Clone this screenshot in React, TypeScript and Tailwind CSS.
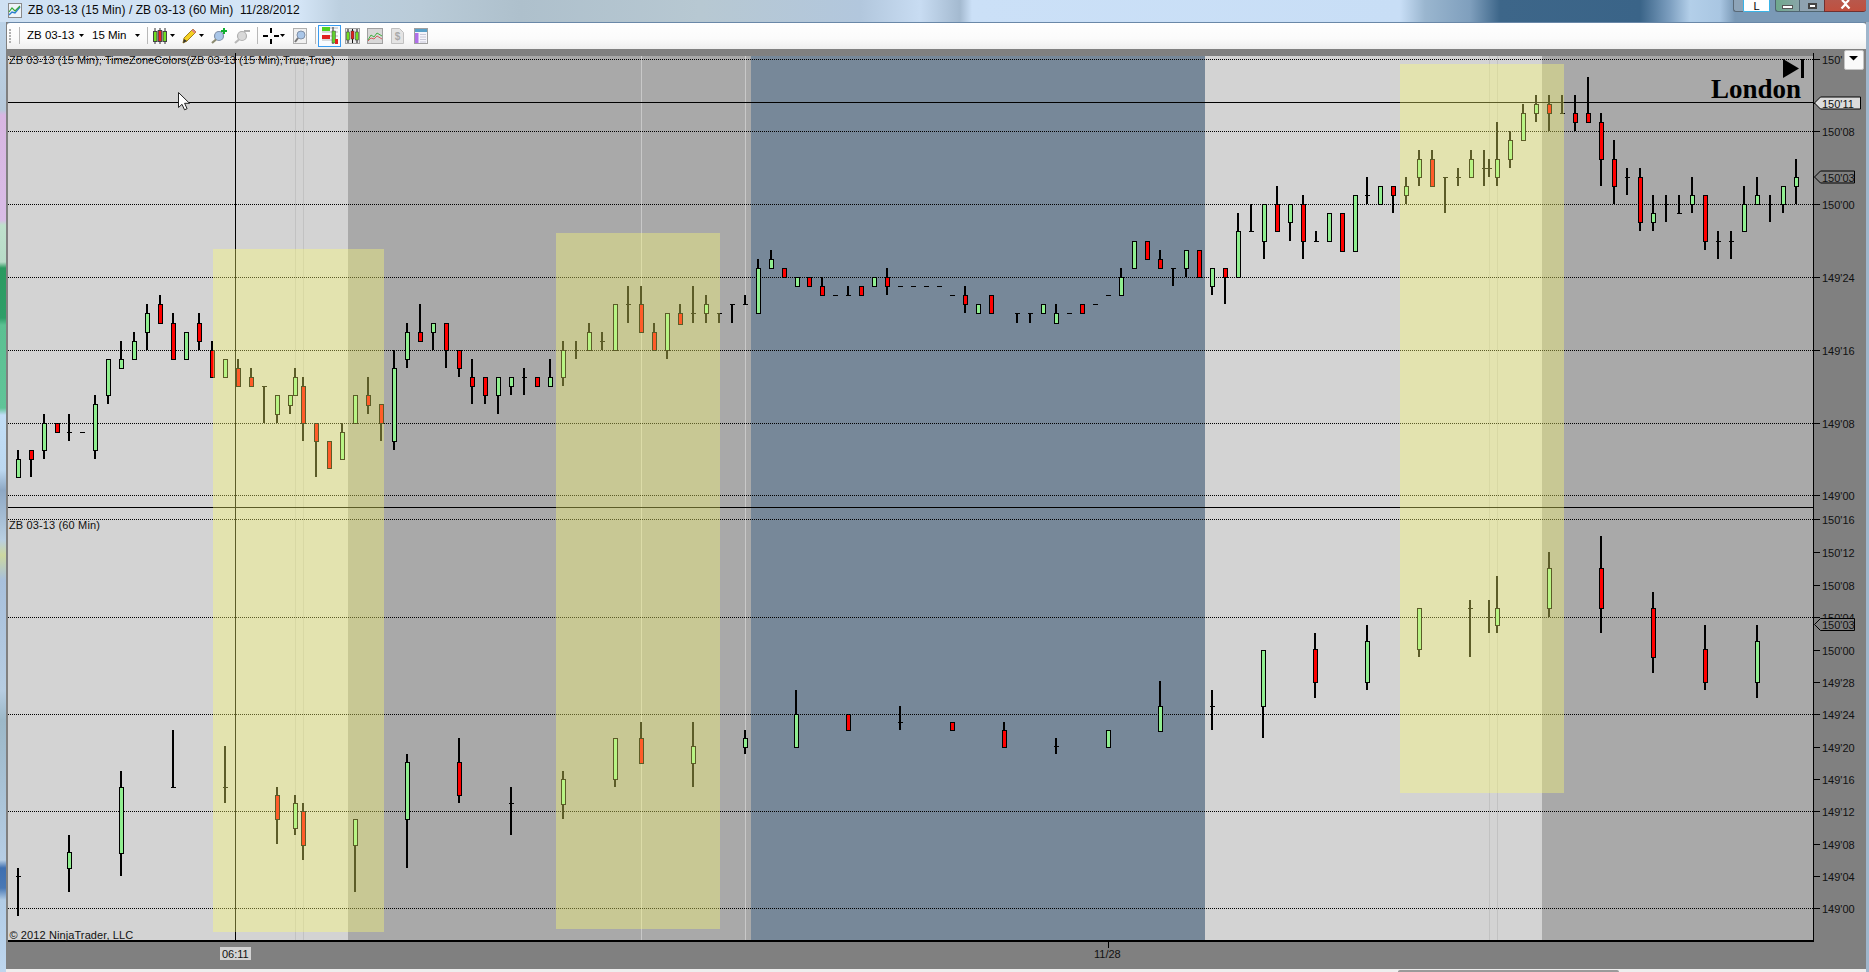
import React from "react";

type Bar = [number, number, number, number, number, "g" | "r" | "d"];
// x, high, low, bodyTop, bodyBottom, kind (d = doji dash at bodyTop)
const upper: Bar[] = [
  [18,450,477,459,477,"g"],[31,450,477,450,459,"r"],[44,414,459,423,450,"g"],[57,423,432,423,432,"r"],[69,414,441,432,432,"d"],[82,432,432,432,432,"d"],
  [95,395,459,404,450,"g"],[108,359,404,359,395,"g"],[121,341,368,359,368,"g"],[134,332,359,341,359,"g"],[147,304,350,313,332,"g"],[160,295,323,304,323,"r"],
  [173,313,359,323,359,"r"],[186,332,359,332,359,"g"],[199,313,350,323,341,"r"],[212,341,377,350,377,"r"],[225,359,377,359,377,"g"],[238,359,386,368,386,"r"],
  [251,368,386,377,386,"r"],[264,386,423,386,386,"d"],[277,395,423,395,414,"g"],[290,395,414,395,405,"g"],[295,368,395,377,395,"g"],[303,377,441,386,423,"r"],
  [316,423,477,423,441,"r"],[329,441,468,441,468,"r"],[342,423,459,432,459,"g"],[355,395,423,395,423,"g"],[368,377,414,395,405,"r"],[381,404,441,404,423,"r"],
  [394,350,450,368,441,"g"],[407,323,368,332,359,"g"],[420,304,341,332,341,"r"],[433,323,350,323,332,"g"],[446,323,368,323,350,"r"],[459,350,377,350,368,"r"],
  [472,359,404,377,386,"r"],[485,377,404,377,395,"r"],[498,377,414,377,395,"g"],[511,377,395,377,386,"g"],[524,368,395,377,377,"d"],[537,377,386,377,386,"r"],
  [550,359,386,377,386,"g"],[563,341,386,350,377,"g"],[576,341,359,350,350,"d"],[589,323,350,332,350,"g"],[602,332,350,341,341,"d"],[615,304,350,304,350,"g"],
  [628,286,323,304,304,"d"],[641,286,332,304,332,"r"],[654,323,350,332,350,"r"],[667,313,359,313,350,"g"],[680,304,324,313,324,"r"],[693,286,323,313,313,"d"],
  [706,295,323,304,313,"g"],[719,313,323,313,313,"d"],[732,304,323,304,304,"d"],[745,295,304,304,304,"d"],[758,259,313,268,313,"g"],[771,250,268,259,268,"g"],
  [784,268,277,268,277,"r"],[797,277,286,277,286,"g"],[809,277,286,277,286,"r"],[822,277,295,286,295,"r"],[835,295,295,295,295,"d"],[848,286,295,295,295,"d"],
  [861,286,295,286,295,"r"],[874,277,286,277,286,"g"],[887,268,295,277,286,"r"],[900,286,286,286,286,"d"],[913,286,286,286,286,"d"],[926,286,286,286,286,"d"],
  [939,286,286,286,286,"d"],[952,295,295,295,295,"d"],[965,286,313,295,304,"r"],[978,304,313,304,313,"g"],[991,295,313,295,313,"r"],[1017,313,323,313,313,"d"],
  [1030,313,323,313,313,"d"],[1043,304,313,304,313,"g"],[1056,304,323,313,323,"g"],[1069,313,313,313,313,"d"],[1082,304,313,304,313,"r"],[1095,304,304,304,304,"d"],
  [1108,295,295,295,295,"d"],[1121,268,295,277,295,"g"],[1134,241,268,241,268,"g"],[1147,241,259,241,259,"r"],[1160,250,268,259,268,"r"],[1173,268,286,268,268,"d"],
  [1186,250,277,250,268,"g"],[1199,250,277,250,277,"r"],[1212,268,295,268,286,"g"],[1225,268,304,268,277,"r"],[1238,213,277,231,277,"g"],[1251,204,231,231,231,"d"],
  [1264,204,259,204,241,"g"],[1277,186,231,204,231,"r"],[1290,204,241,204,222,"g"],[1303,195,259,204,241,"r"],[1316,231,241,241,241,"d"],[1329,213,241,213,241,"g"],
  [1342,213,251,213,251,"r"],[1355,195,251,195,251,"g"],[1367,177,204,195,195,"d"],[1380,186,204,186,204,"g"],[1393,186,213,186,195,"r"],[1406,177,204,186,195,"g"],
  [1419,150,186,159,177,"g"],[1432,150,186,159,186,"r"],[1445,177,213,177,177,"d"],[1458,168,186,177,177,"d"],[1471,150,177,159,177,"g"],[1484,150,186,168,168,"d"],
  [1489,159,177,168,168,"d"],[1497,122,186,159,177,"g"],[1510,131,168,140,159,"g"],[1523,104,140,113,140,"g"],[1536,95,122,104,113,"g"],[1549,95,131,104,113,"r"],
  [1562,95,113,113,113,"d"],[1575,95,131,113,122,"r"],[1588,77,122,113,122,"r"],[1601,113,186,122,159,"r"],[1614,140,204,159,186,"r"],[1627,168,195,177,177,"d"],
  [1640,168,231,177,222,"r"],[1653,195,231,213,222,"g"],[1666,195,222,204,204,"d"],[1679,195,213,213,213,"d"],[1692,177,213,195,204,"g"],[1705,195,250,195,241,"r"],
  [1718,231,259,241,241,"d"],[1731,231,259,241,241,"d"],[1744,186,231,204,231,"g"],[1757,177,204,195,204,"g"],[1770,195,222,204,204,"d"],[1783,186,213,186,204,"g"],
  [1796,159,204,177,186,"g"],
];

const lower: Bar[] = [
  [18,868,916,876,876,"d"],[69,835,892,852,868,"g"],[121,771,876,787,853,"g"],[173,730,787,787,787,"d"],[225,746,803,787,787,"d"],[277,787,844,795,819,"r"],
  [295,795,835,803,828,"g"],[303,803,860,811,845,"r"],[355,819,892,819,845,"g"],[407,754,868,762,819,"g"],[459,738,803,762,795,"r"],[511,787,835,803,803,"d"],
  [563,771,819,779,804,"g"],[615,738,787,738,779,"g"],[641,722,763,738,763,"r"],[693,722,787,746,763,"g"],[745,730,754,738,747,"g"],[796,690,747,714,747,"g"],
  [848,714,730,714,730,"r"],[900,706,730,722,722,"d"],[952,722,730,722,730,"r"],[1004,722,747,730,747,"r"],[1056,738,754,746,746,"d"],[1108,730,747,730,747,"g"],
  [1160,681,731,706,731,"g"],[1212,690,730,706,706,"d"],[1263,650,738,650,706,"g"],[1315,633,698,649,682,"r"],[1367,625,690,641,682,"g"],[1419,608,657,608,649,"g"],
  [1470,600,657,608,608,"d"],[1489,600,633,617,617,"d"],[1497,576,633,608,625,"g"],[1549,552,617,568,608,"g"],[1601,536,633,568,608,"r"],[1653,592,673,608,657,"r"],
  [1705,625,690,649,682,"r"],[1757,625,698,641,682,"g"],
];

const gridUpper = [59, 131, 204, 277, 350, 423, 495];
const gridLower = [519, 617, 714, 811, 908];
const labelsUpper: [string, number][] = [["150'", 59], ["150'08", 131], ["150'00", 204], ["149'24", 277], ["149'16", 350], ["149'08", 423], ["149'00", 495]];
const labelsLower: [string, number][] = [["150'16", 519], ["150'12", 552], ["150'08", 585], ["150'04", 617], ["150'00", 650], ["149'28", 682], ["149'24", 714], ["149'20", 747], ["149'16", 779], ["149'12", 811], ["149'08", 844], ["149'04", 876], ["149'00", 908]];
const paleLight = [295, 303, 1489, 1497];
const paleDark = [641, 745];

function Candle({ b }: { b: Bar }) {
  const [x, hi, lo, top, bot, kind] = b;
  return (
    <g>
      {lo > hi && <rect x={x - 1} y={hi} width={2} height={lo - hi} fill="#000" />}
      {kind === "d" ? (
        <rect x={x - 2} y={top} width={5} height={1} fill="#000" />
      ) : (
        <rect x={x - 1.5} y={top + 0.5} width={4} height={bot - top} fill={kind === "g" ? "#90ee90" : "#ff0000"} stroke="#000" strokeWidth={1} />
      )}
    </g>
  );
}

function Caret({ className = "ml-[7px]" }: { className?: string }) {
  return (
    <svg width="5" height="3" viewBox="0 0 5 3" className={`shrink-0 ${className}`}>
      <path d="M0 0h5L2.5 3z" fill="#000" />
    </svg>
  );
}

function Sep({ className }: { className: string }) {
  return <div className={`h-[17px] w-[1px] shrink-0 bg-[#b8b8b8] ${className}`} />;
}

function Magnifier({ plus, minus, gray }: { plus?: boolean; minus?: boolean; gray?: boolean }) {
  return (
    <svg width="16" height="16" viewBox="0 0 16 16">
      <circle cx="8" cy="8" r="4.5" fill={gray ? "#d8d8d8" : "#a9c6e8"} stroke={gray ? "#b0b0b0" : "#8090a8"} strokeWidth="1.2" />
      <path d="M5 11.5L1 15" stroke={gray ? "#b8b8b8" : "#8a8a70"} strokeWidth="2.2" />
      {plus && <path d="M13 0v6M10 3h6" stroke="#10b030" strokeWidth="2" />}
      {minus && <path d="M10 3h6" stroke="#b0b0b0" strokeWidth="2" />}
    </svg>
  );
}

export default function App() {
  return (
    <div className="flex h-[972px] w-[1869px] flex-col overflow-hidden bg-[#808080] [font-family:'Liberation_Sans',Arial,sans-serif]">
      {/* Title bar */}
      <header className="flex h-[22px] shrink-0 items-start bg-[linear-gradient(90deg,#cfe1f3_0,#d4e5f6_300px,#bccfdf_340px,#b9cbd8_420px,#aec0cc_520px,#b7c8d2_700px,#b2c7dd_860px,#c8dcf2_920px,#a4bad0_960px,#cbe0f7_972px,#c8def6_1400px,#9ab6cf_1425px,#7f9fbd_1470px,#3d6689_1500px,#3a6488_1640px,#7d9fc0_1670px,#b3cfe9_1690px,#a9c6e2_1720px,#7a99b6_1735px,#7a99b6_1869px)]">
        <svg width="14" height="15" viewBox="0 0 14 15" className="ml-[8px] mt-[3px] shrink-0">
          <rect x="0.5" y="0.5" width="13" height="14" fill="#eef3f8" stroke="#8a8a8a" />
          <path d="M1 12L4 9l3 1 5-6" stroke="#2d7fd0" strokeWidth="1.4" fill="none" />
          <path d="M1 9l3-4 3 3 5-5" stroke="#38a838" strokeWidth="1.2" fill="none" />
        </svg>
        <span className="ml-[6px] mt-[2px] whitespace-pre text-[12px] leading-[16px] tracking-[0.05px] text-[#0a0a0a]">ZB 03-13 (15 Min) / ZB 03-13 (60 Min)  11/28/2012</span>
        <div className="ml-auto mr-[3px] flex h-[12px] shrink-0 items-stretch overflow-hidden">
          <div className="w-[10px] rounded-bl-[3px] border-b border-l border-[#5a6a78] bg-[#8ea4b8]" />
          <div className="flex w-[27px] items-center justify-center rounded-b-[2px] border-b border-x border-[#39b4e8] bg-white text-[11px] leading-[10px] text-black">L</div>
          <div className="ml-[5px] flex w-[24px] items-end justify-center rounded-bl-[3px] border-b border-l border-[#4f6570] bg-[linear-gradient(90deg,#6fa88c,#8aa5a8)] pb-[2px]">
            <div className="h-[4px] w-[11px] border border-[#555] bg-white" />
          </div>
          <div className="flex w-[25px] items-center justify-center border-b border-l border-[#4f6570] bg-[#8fa2b0]">
            <div className="h-[6px] w-[9px] border-2 border-[#444] bg-white" />
          </div>
          <div className="flex w-[42px] items-start justify-center rounded-br-[3px] border-b border-l border-[#703030] bg-[linear-gradient(180deg,#b8584c,#c0503f)]">
            <svg width="11" height="9" viewBox="0 0 11 9">
              <path d="M2 0l3.5 3.4L9 0M1.5 8.5L5.5 4.2l4 4.3" stroke="#fff" strokeWidth="2.2" fill="none" />
            </svg>
          </div>
        </div>
      </header>

      <div className="flex min-h-0 flex-1">
        {/* Left window sliver */}
        <div className="w-[6px] shrink-0 bg-[linear-gradient(180deg,#bcd3e8_0,#b7c9da_88px,#d8b6e2_93px,#d9bce6_198px,#bfe0cc_203px,#b8dcc8_240px,#2b9a60_246px,#2e9e68_296px,#5cc092_303px,#60c498_386px,#c2def6_393px,#bcd8f0_448px,#8ea8c4_468px,#b9cfe2_518px,#cdd8a0_533px,#a8c0dc_558px,#b7cde2_668px,#9cb8c8_698px,#b6cde4_838px,#3f6fb0_846px,#4a78b4_866px,#b2cce6_878px,#bed6ee_950px)]" />
        <div className="flex min-w-0 flex-1 flex-col">
          {/* Toolbar */}
          <div className="ml-[1px] flex h-[27px] shrink-0 items-center rounded-t-[3px] border-t border-[#6a88a8] bg-[linear-gradient(180deg,#ffffff,#fbfbfb_60%,#eeeeee)] pb-[1px] text-[11.5px] text-black">
            <div className="ml-[2px] flex h-[14px] w-[3px] shrink-0 flex-col justify-between">
              {[0, 1, 2, 3, 4].map((i) => (
                <div key={i} className="h-[2px] w-[2px] bg-[#b0b0b0]" />
              ))}
            </div>
            <Sep className="ml-[7px]" />
            <span className="ml-[7px] w-[45px] shrink-0 whitespace-nowrap">ZB 03-13</span>
            <Caret />
            <span className="ml-[8px] w-[36px] shrink-0 whitespace-nowrap">15 Min</span>
            <Caret />
            <Sep className="ml-[7px]" />
            <svg width="14" height="16" viewBox="0 0 14 16" className="ml-[5px] shrink-0">
              <path d="M2 0v16M7 0v16M12 0v16" stroke="#333" />
              <rect x="0.5" y="3.5" width="3.5" height="10" fill="#70e020" stroke="#444" />
              <rect x="5.2" y="2.5" width="3.5" height="11" fill="#f02020" stroke="#444" />
              <rect x="10" y="3.5" width="3.5" height="10" fill="#70e020" stroke="#444" />
            </svg>
            <Caret className="ml-[3px]" />
            <svg width="15" height="16" viewBox="0 0 15 16" className="ml-[7px] shrink-0">
              <path d="M1 15l1-5L11 1l3 3-9 9z" fill="#f5d020" stroke="#a08020" />
              <path d="M1 15l1-4 3 2z" fill="#333" />
              <path d="M11 1l3 3-1.5 1.5-3-3z" fill="#e08080" />
            </svg>
            <Caret className="ml-[2px]" />
            <div className="ml-[7px] shrink-0"><Magnifier plus /></div>
            <div className="ml-[7px] shrink-0"><Magnifier minus gray /></div>
            <Sep className="ml-[7px]" />
            <svg width="16" height="16" viewBox="0 0 16 16" className="ml-[5px] shrink-0">
              <path d="M0 8h5M11 8h5M8 0v5M8 11v5" stroke="#000" strokeWidth="2" />
            </svg>
            <Caret className="ml-[1px]" />
            <svg width="14" height="16" viewBox="0 0 14 16" className="ml-[8px] shrink-0">
              <rect x="0.5" y="0.5" width="13" height="15" fill="#f0f0f0" stroke="#b0b0b0" />
              <circle cx="8" cy="7" r="4" fill="#a9c6e8" stroke="#8090a8" />
              <path d="M5 10l-3 4" stroke="#777" strokeWidth="2" />
            </svg>
            <Sep className="ml-[8px]" />
            <div className="ml-[2px] flex h-[22px] w-[23px] shrink-0 items-center justify-center border border-[#3a9cf0] bg-[#f8fbff]">
              <svg width="16" height="17" viewBox="0 0 16 17">
                <path d="M0 1h16M0 5h16M0 9h16M0 13h16" stroke="#b8b8b8" />
                <rect x="0" y="0" width="8" height="4" fill="#50d020" />
                <rect x="0" y="8" width="8" height="4" fill="#e02020" />
                <path d="M11 0v17" stroke="#333" />
                <rect x="10" y="4" width="3.5" height="12" fill="#60d030" stroke="#444" strokeWidth="0.5" />
                <rect x="13" y="12" width="3" height="5" fill="#e02020" />
              </svg>
            </div>
            <svg width="15" height="16" viewBox="0 0 15 16" className="ml-[4px] shrink-0">
              <rect x="0.5" y="0.5" width="14" height="15" fill="#e8e8e8" stroke="#a0a0a0" />
              <path d="M3 1v14M7.5 1v14M12 1v14" stroke="#111" />
              <rect x="1.5" y="4" width="3" height="8" fill="#70e020" stroke="#333" strokeWidth="0.5" />
              <rect x="6" y="3" width="3" height="8" fill="#e02020" stroke="#333" strokeWidth="0.5" />
              <rect x="10.5" y="4" width="3" height="8" fill="#70e020" stroke="#333" strokeWidth="0.5" />
            </svg>
            <svg width="16" height="16" viewBox="0 0 16 16" className="ml-[7px] shrink-0">
              <rect x="0.5" y="0.5" width="15" height="15" fill="#d8d8d8" stroke="#a0a0a0" />
              <path d="M1 12l3-5 3 2 3-4 5 3" stroke="#40b040" fill="none" />
              <path d="M1 13l3-3 3 1 3-3 5 3" stroke="#d06060" fill="none" />
            </svg>
            <svg width="13" height="16" viewBox="0 0 13 16" className="ml-[8px] shrink-0">
              <path d="M0.5 0.5h8l4 4v11h-12z" fill="#e4e4e4" stroke="#c0c0c0" />
              <text x="6.5" y="12" textAnchor="middle" fontSize="10" fontWeight="700" fill="#a8a8a8">$</text>
            </svg>
            <svg width="14" height="16" viewBox="0 0 14 16" className="ml-[10px] shrink-0">
              <rect x="0.5" y="0.5" width="13" height="15" fill="#f4f4fa" stroke="#a0a0a0" />
              <rect x="1" y="1" width="12" height="3" fill="#5aa0c8" />
              <rect x="1" y="5" width="3.5" height="10" fill="#b070e8" />
              <path d="M6 6.5h6M6 9h6M6 11.5h6M6 14h6" stroke="#c8c8d8" />
            </svg>
          </div>

          {/* Chart */}
          <svg width="1860" height="920" viewBox="6 49 1860 920" className="block shrink-0" shapeRendering="crispEdges">
            <rect x="8" y="56" width="340" height="885" fill="#d3d3d3" />
            <rect x="348" y="56" width="403" height="885" fill="#a9a9a9" />
            <rect x="751" y="56" width="454" height="885" fill="#778899" />
            <rect x="1205" y="56" width="337" height="885" fill="#d3d3d3" />
            <rect x="1542" y="56" width="271" height="885" fill="#a9a9a9" />

            {paleLight.map((x) => <rect key={x} x={x} y="56" width="1" height="885" fill="#c2c2c2" />)}
            {paleDark.map((x) => <rect key={x} x={x} y="56" width="1" height="885" fill="#c8c8c8" />)}

            {[...gridUpper, ...gridLower].map((y) => (
              <line key={y} x1="8" x2="1813" y1={y + 0.5} y2={y + 0.5} stroke="#000" strokeDasharray="1 1" />
            ))}

            <rect x="235" y="53" width="1" height="888" fill="#000" />
            <rect x="8" y="102" width="1805" height="1" fill="#000" />
            <rect x="8" y="507" width="1805" height="1" fill="#000" />

            {upper.map((b, i) => <Candle key={`u${i}`} b={b} />)}
            {lower.map((b, i) => <Candle key={`l${i}`} b={b} />)}

            <rect x="213" y="249" width="171" height="683" fill="#ffff6e" fillOpacity="0.36" />
            <rect x="556" y="233" width="164" height="696" fill="#ffff6e" fillOpacity="0.36" />
            <rect x="1400" y="64" width="164" height="729" fill="#ffff6e" fillOpacity="0.36" />

            <rect x="8" y="940" width="1806" height="2" fill="#000" />
            <rect x="1813" y="53" width="1" height="889" fill="#000" />
            <rect x="1108" y="941" width="1" height="7" fill="#000" />
            {[...labelsUpper, ["", 103] as [string, number], ...labelsLower].map(([, y], i) => (
              <rect key={i} x="1814" y={y} width="6" height="1" fill="#000" />
            ))}

            <g shapeRendering="auto" className="text-[11px]" fill="#111">
              <text x="9" y="63.5" className="tracking-[0.06px]">ZB 03-13 (15 Min), TimeZoneColors(ZB 03-13 (15 Min),True,True)</text>
              <text x="9" y="529" className="tracking-[0.14px]">ZB 03-13 (60 Min)</text>
              <text x="9.5" y="939" className="tracking-[0.1px]">© 2012 NinjaTrader, LLC</text>

              {labelsUpper.map(([t, y]) => <text key={t} x="1822" y={y + 5}>{t}</text>)}
              {labelsLower.map(([t, y]) => <text key={t} x="1822" y={y + 5}>{t}</text>)}

              <path d="M1814.5 103l6-6h40v12h-40z" fill="#dcdcdc" stroke="#000" />
              <text x="1822" y="107.5">150'11</text>
              <path d="M1814.5 177l6-6h34v12h-34z" fill="#808080" stroke="#000" />
              <text x="1822" y="181.5">150'03</text>
              <path d="M1814.5 624.5l6-6h34v12h-34z" fill="#808080" stroke="#000" />
              <text x="1822" y="629">150'03</text>

              <rect x="220" y="947" width="31" height="13" fill="#d3d3d3" />
              <text x="222" y="958">06:11</text>
              <text x="1094" y="958">11/28</text>

              <path d="M1783 59l16 9.5L1783 78z" fill="#000" />
              <rect x="1801" y="59" width="3" height="19" fill="#000" />
              <text x="1711" y="97.5" fill="#000" className="text-[27px] font-bold [font-family:'Liberation_Serif',serif]">London</text>

              <path d="M178.5 92.5v15l3.5-3.2 2.5 5.5 2.6-1.1-2.5-5.4h4.9z" fill="#fff" stroke="#222" />
            </g>

            <g shapeRendering="auto">
              <rect x="1844.5" y="50.5" width="19" height="19" rx="1.5" fill="#fafafa" stroke="#c4c4c4" />
              <path d="M1849 56h9l-4.5 4.5z" fill="#000" />
            </g>
          </svg>

          {/* Bottom tab strip */}
          <div className="flex min-h-0 flex-1 bg-[#eeeeee]">
            <div className="ml-[1392px] mt-[1px] w-[221px] rounded-t-[2px] border border-[#9a9a9a] bg-white" />
          </div>
        </div>
        <div className="w-[3px] shrink-0 bg-[#9fb6cc]" />
      </div>
    </div>
  );
}
